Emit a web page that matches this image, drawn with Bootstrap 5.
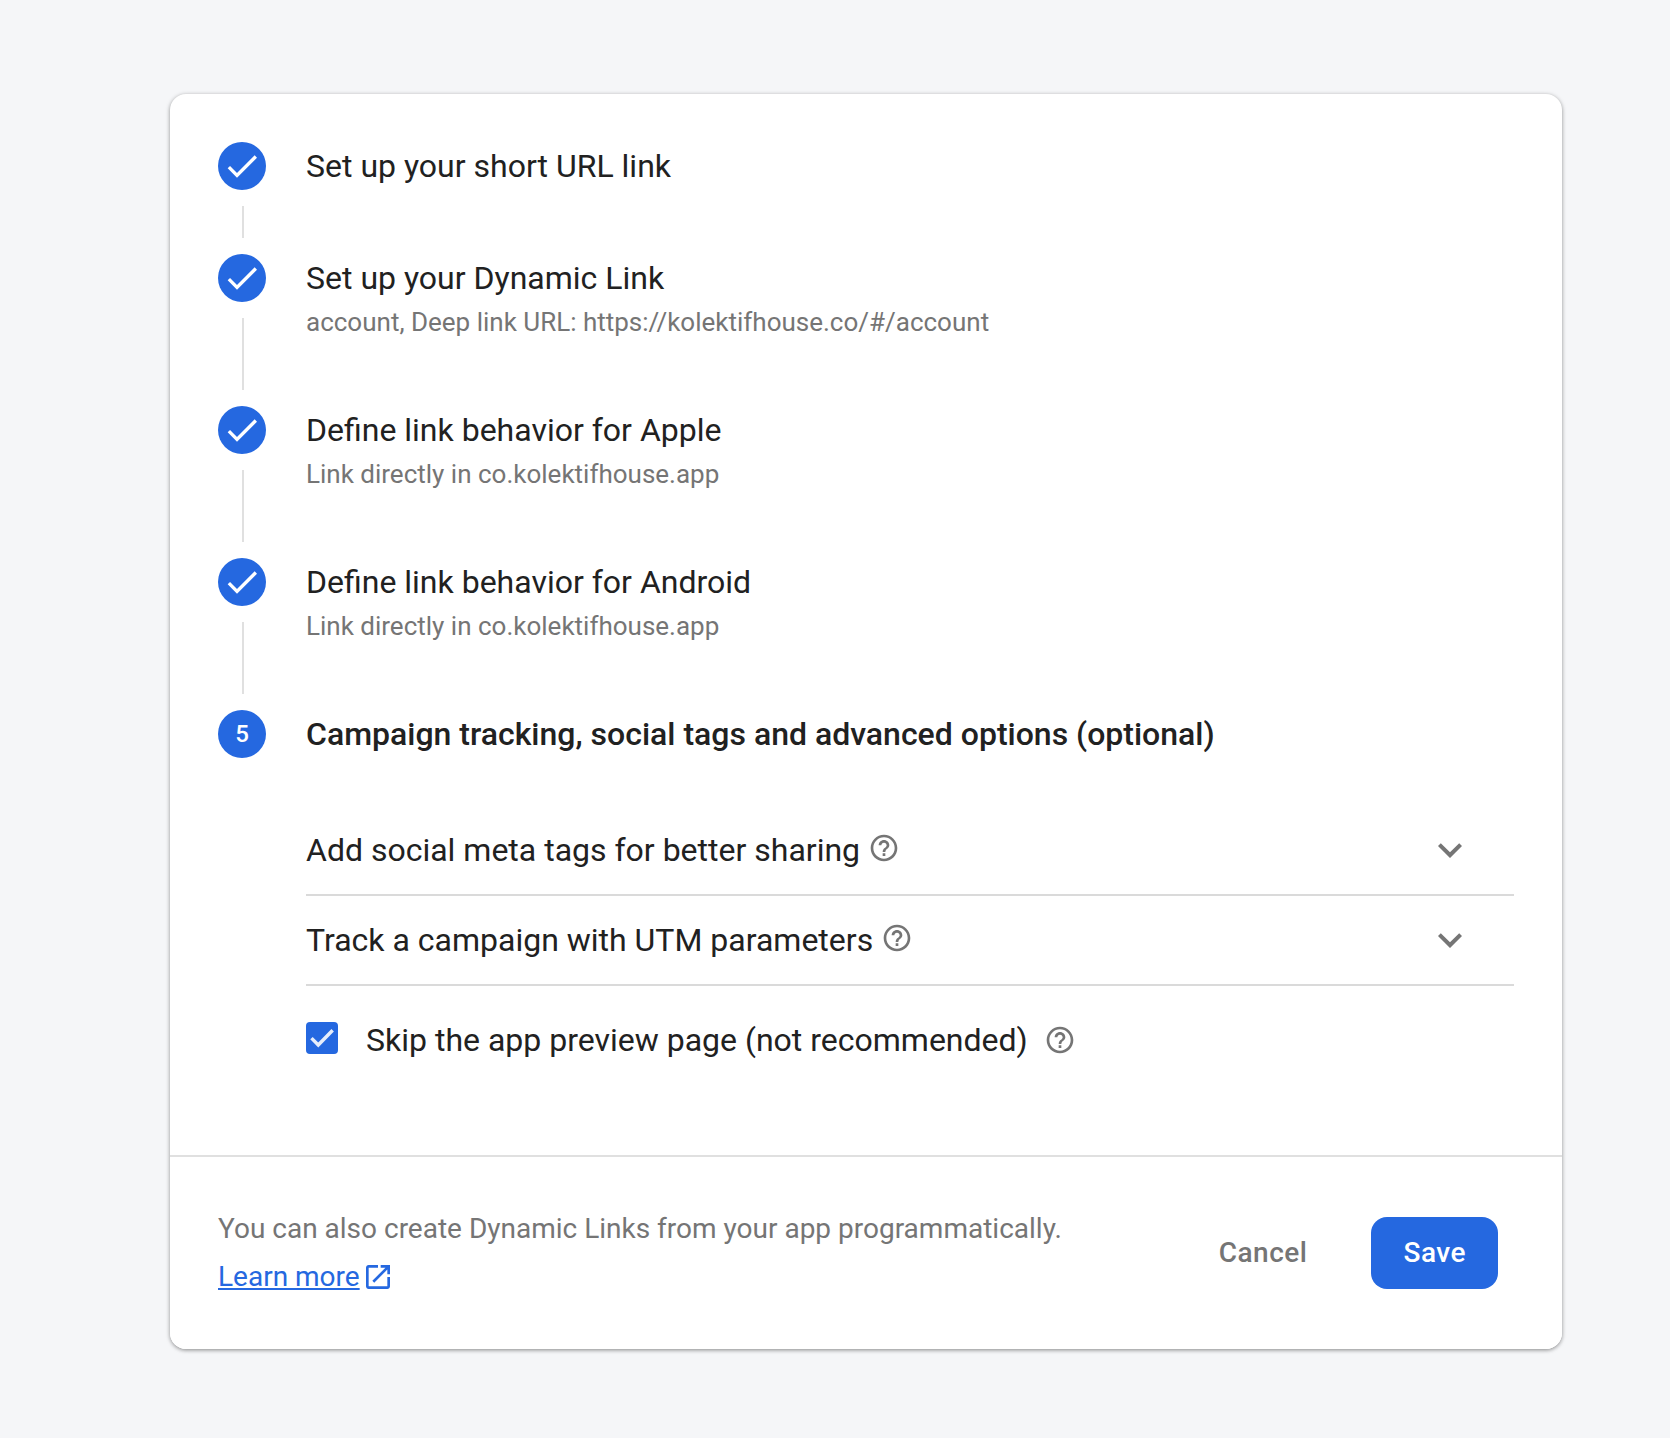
<!DOCTYPE html>
<html lang="en">
<head>
<meta charset="utf-8">
<meta name="viewport" content="width=device-width, initial-scale=1">
<title>Create Dynamic Link</title>
<link href="https://cdn.jsdelivr.net/npm/bootstrap@5.3.0/dist/css/bootstrap.min.css" rel="stylesheet">
<style>
  :root { --ink: #212121; --muted: #757575; --accent: #2568e0; --rule: #dadada; }
  body { background: #f5f6f8; color: var(--ink); font-family: Roboto, "Liberation Sans", sans-serif; font-size: 32px; line-height: 48px; }
  svg { fill: currentColor; flex: none; }
  .page-area { padding: 94px 108px 89px 170px; }
  .wizard { border: 0; border-radius: 16px; box-shadow: 0 1px 4px 0 rgba(0,0,0,.37), 0 2px 4px -1px rgba(0,0,0,.12); }
  .wizard-body { padding: 48px 48px 91px; }
  .step { gap: 40px; }
  .step-rail { gap: 16px; padding-bottom: 16px; }
  .step-dot { width: 48px; height: 48px; background: var(--accent); color: #fff; font-size: 24px; font-weight: 500; }
  .step-line { width: 2px; margin-left: 2px; background: #e0e0e0; }
  .step-done { padding-bottom: 64px; }
  .step-title { font-size: 32px; line-height: 48px; margin: 0; font-weight: 400; }
  .step-current { font-weight: 500; }
  .step-note { font-size: 26px; line-height: 40px; color: var(--muted); margin: 0; }
  .options { margin-top: 48px; }
  .option-row { padding: 20px 40px 20px 0; border-bottom: 2px solid var(--rule); color: var(--ink); }
  .option-label { gap: 8px; }
  .help { color: var(--muted); }
  .option-label .help { margin-bottom: 4px; }
  .skip-row { gap: 28px; padding-top: 26px; }
  .skip-row label { padding-top: 4px; }
  .skip-row .form-check-input { width: 32px; height: 32px; border: 0; border-radius: 4px; flex: none; }
  .skip-row .form-check-input:not(:checked) { border: 4px solid var(--muted); }
  .skip-row .form-check-input:checked { background-color: var(--accent); background-size: 32px 32px;
    background-image: url("data:image/svg+xml,%3Csvg xmlns='http://www.w3.org/2000/svg' viewBox='0 0 24 24'%3E%3Cpath fill='none' stroke='%23e6edfb' stroke-width='2.6' d='M4.1 12.1L9.200 17.200L20 6.200'/%3E%3C/svg%3E"); }
  .wizard .wizard-footer { background: #fff; border-top: 2px solid #e0e0e0; border-radius: 0 0 16px 16px; padding: 48px 64px 48px 48px; font-size: 28px; gap: 32px; color: var(--muted); }
  .learn { color: var(--accent); text-decoration: none; gap: 2px; }
  .learn span { text-decoration: underline; text-decoration-thickness: 2px; text-underline-offset: 2px; }
  .wizard-actions { gap: 32px; }
  .wizard-footer .btn { --bs-btn-font-size: 28px; --bs-btn-font-weight: 500; --bs-btn-line-height: 40px; --bs-btn-padding-x: 32px; --bs-btn-padding-y: 16px; --bs-btn-border-width: 0; --bs-btn-border-radius: 16px; letter-spacing: .5px; }
  .btn-save { --bs-btn-bg: var(--accent); --bs-btn-color: #fff; --bs-btn-hover-bg: #1d5ac8; --bs-btn-hover-color: #fff; }
  .btn-quiet { --bs-btn-color: var(--muted); --bs-btn-hover-bg: #f4f5f7; }
</style>
</head>
<body>
<svg class="d-none" aria-hidden="true">
  <symbol id="check" viewBox="0 0 24 24"><path d="M9 16.17L4.83 12l-1.42 1.41L9 19 21 7l-1.41-1.41z"/></symbol>
  <symbol id="help" viewBox="0 0 24 24"><path d="M11 18h2v-2h-2v2zm1-16C6.48 2 2 6.48 2 12s4.480 10 10 10 10-4.480 10-10S17.520 2 12 2zm0 18c-4.410 0-8-3.590-8-8s3.590-8 8-8 8 3.590 8 8-3.590 8-8 8zm0-14c-2.210 0-4 1.790-4 4h2c0-1.100.9-2 2-2s2 .9 2 2c0 2-3 1.750-3 5h2c0-2.250 3-2.500 3-5 0-2.210-1.790-4-4-4z"/></symbol>
  <symbol id="chevron" viewBox="0 0 24 24"><path d="M16.590 8.590L12 13.170 7.410 8.590 6 10l6 6 6-6z"/></symbol>
  <symbol id="open" viewBox="0 0 24 24"><path d="M19 19H5V5h7V3H5c-1.110 0-2 .9-2 2v14c0 1.100.89 2 2 2h14c1.100 0 2-.9 2-2v-7h-2v7zM14 3v2h3.590l-9.830 9.830 1.410 1.410L19 6.410V10h2V3h-7z"/></symbol>
</svg>

<main class="page-area">
  <div class="card wizard">
    <div class="card-body wizard-body">
      <ol class="list-unstyled mb-0">
        <li class="step d-flex">
          <div class="step-rail d-flex flex-column align-items-center">
            <span class="step-dot rounded-circle d-flex align-items-center justify-content-center"><svg width="40" height="40"><use href="#check"/></svg></span>
            <span class="step-line flex-grow-1"></span>
          </div>
          <div class="step-done">
            <h2 class="step-title">Set up your short URL link</h2>
          </div>
        </li>
        <li class="step d-flex">
          <div class="step-rail d-flex flex-column align-items-center">
            <span class="step-dot rounded-circle d-flex align-items-center justify-content-center"><svg width="40" height="40"><use href="#check"/></svg></span>
            <span class="step-line flex-grow-1"></span>
          </div>
          <div class="step-done">
            <h2 class="step-title">Set up your Dynamic Link</h2>
            <p class="step-note">account, Deep link URL: https://kolektifhouse.co/#/account</p>
          </div>
        </li>
        <li class="step d-flex">
          <div class="step-rail d-flex flex-column align-items-center">
            <span class="step-dot rounded-circle d-flex align-items-center justify-content-center"><svg width="40" height="40"><use href="#check"/></svg></span>
            <span class="step-line flex-grow-1"></span>
          </div>
          <div class="step-done">
            <h2 class="step-title">Define link behavior for Apple</h2>
            <p class="step-note">Link directly in co.kolektifhouse.app</p>
          </div>
        </li>
        <li class="step d-flex">
          <div class="step-rail d-flex flex-column align-items-center">
            <span class="step-dot rounded-circle d-flex align-items-center justify-content-center"><svg width="40" height="40"><use href="#check"/></svg></span>
            <span class="step-line flex-grow-1"></span>
          </div>
          <div class="step-done">
            <h2 class="step-title">Define link behavior for Android</h2>
            <p class="step-note">Link directly in co.kolektifhouse.app</p>
          </div>
        </li>
        <li class="step d-flex">
          <span class="step-dot rounded-circle d-flex align-items-center justify-content-center flex-shrink-0">5</span>
          <div class="flex-grow-1">
            <h2 class="step-title step-current">Campaign tracking, social tags and advanced options (optional)</h2>
            <div class="options">
              <button type="button" class="option-row d-flex w-100 align-items-center justify-content-between text-start bg-transparent border-top-0 border-start-0 border-end-0" aria-expanded="false">
                <span class="option-label d-flex align-items-center">Add social meta tags for better sharing <svg class="help" width="32" height="32"><use href="#help"/></svg></span>
                <svg class="help" width="48" height="48"><use href="#chevron"/></svg>
              </button>
              <button type="button" class="option-row d-flex w-100 align-items-center justify-content-between text-start bg-transparent border-top-0 border-start-0 border-end-0" aria-expanded="false">
                <span class="option-label d-flex align-items-center">Track a campaign with UTM parameters <svg class="help" width="32" height="32"><use href="#help"/></svg></span>
                <svg class="help" width="48" height="48"><use href="#chevron"/></svg>
              </button>
              <div class="skip-row d-flex align-items-center">
                <input class="form-check-input m-0" type="checkbox" id="skipPreview" checked>
                <label class="d-flex align-items-center gap-3" for="skipPreview">Skip the app preview page (not recommended) <svg class="help" width="32" height="32"><use href="#help"/></svg></label>
              </div>
            </div>
          </div>
        </li>
      </ol>
    </div>
    <div class="card-footer wizard-footer d-flex align-items-center justify-content-between">
      <div>
        <div>You can also create Dynamic Links from your app programmatically.</div>
        <a href="#" class="learn d-inline-flex align-items-center align-top"><span>Learn more</span><svg width="32" height="32"><use href="#open"/></svg></a>
      </div>
      <div class="wizard-actions d-flex flex-shrink-0">
        <button type="button" class="btn btn-quiet">Cancel</button>
        <button type="submit" class="btn btn-save">Save</button>
      </div>
    </div>
  </div>
</main>
<script src="https://cdn.jsdelivr.net/npm/bootstrap@5.3.0/dist/js/bootstrap.bundle.min.js"></script>
</body>
</html>
